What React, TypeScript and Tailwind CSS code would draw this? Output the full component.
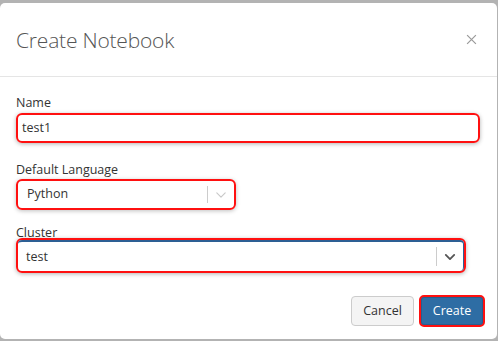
import type { JSX } from "react";

const Chevron = ({ className }: { className: string }): JSX.Element => (
	<svg className={className} viewBox="0 0 20 20" fill="none" stroke="currentColor" strokeLinecap="round" strokeLinejoin="round">
		<path d="M4 7l6 6 6-6" />
	</svg>
);

const App = (): JSX.Element => {
	return (
		<div className="h-[341px] w-[498px] overflow-hidden bg-[#b3b3b3] pt-[3px] pr-px font-['Open_Sans',sans-serif]">
			<div className="flex h-[336px] flex-col rounded-[5px] bg-white">
				{/* header */}
				<div className="flex h-[74px] shrink-0 items-center justify-between border-b border-[#e5e5e5] pl-4 pr-[20px]">
					<h4 className="pt-[2px] text-[21px] font-light tracking-[-0.2px] text-[#555]">Create Notebook</h4>
					<svg className="h-[11px] w-[11px] text-[#9a9a9a]" viewBox="0 0 10 10" stroke="currentColor" strokeWidth={1.1}>
						<path d="M1 1l8 8M9 1l-8 8" />
					</svg>
				</div>

				{/* body */}
				<div className="flex flex-col px-4 pt-[18px] text-[12.5px] text-[#333]">
					<label className="leading-[16px]">Name</label>
					<div className="mt-[2px] flex h-[30px] w-[464px] items-center rounded-[6px] border-2 border-[#ff1010] px-[4px] shadow-[0_1px_4px_rgba(0,0,0,0.3)]">
						test1
					</div>

					<label className="mt-[19px] leading-[16px]">Default Language</label>
					<div className="mt-[1px] flex h-[31px] w-[220px] items-center rounded-[6px] border-2 border-[#ff1010] pl-[9px] pr-[6px] shadow-[0_1px_4px_rgba(0,0,0,0.25)]">
						<span className="flex-1">Python</span>
						<span className="h-[17px] w-px bg-[#ccc]" />
						<Chevron className="ml-[6px] h-[14px] w-[14px] text-[#c8c8c8] [stroke-width:1.6]" />
					</div>

					<label className="mt-[15px] leading-[16px]">Cluster</label>
					<div className="mt-[-3px] h-[35px] w-[450px] rounded-[6px] border-2 border-[#ff1010] shadow-[0_1px_4px_rgba(0,0,0,0.3)]">
						<div className="flex h-full items-center rounded-[4px] border-t-2 border-r border-[#2d5f94] pl-[8px] pr-[6px]">
							<span className="flex-1 pt-px">test</span>
							<span className="h-[19px] w-px bg-[#ccc]" />
							<Chevron className="ml-[6px] h-[14px] w-[14px] text-[#555] [stroke-width:2.6]" />
						</div>
					</div>
				</div>

				{/* footer */}
				<div className="mt-auto flex justify-end gap-[5px] pb-[12px] pr-[12px]">
					<button className="mt-px h-[30px] w-[63px] rounded-[4px] border border-[#ccc] bg-[#f4f4f4] text-[12.5px] text-[#333]">
						Cancel
					</button>
					<button className="h-[32px] w-[66px] rounded-[5px] border-2 border-[#ff1010] bg-[#2e6da4] text-[12.5px] text-white shadow-[inset_0_0_0_1px_#285e8e]">
						Create
					</button>
				</div>
			</div>
		</div>
	);
};

export default App;
